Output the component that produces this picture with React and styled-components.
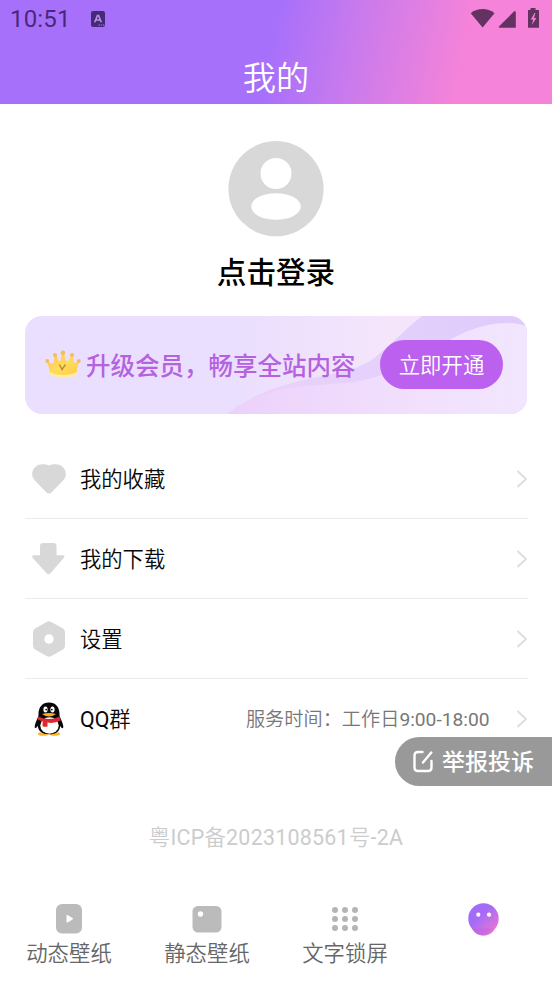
import React from 'react';
import styled, { createGlobalStyle } from 'styled-components';

const GlobalStyle = createGlobalStyle`
  * { box-sizing: border-box; }
  body { margin: 0; background: #fff; }
  svg { display: block; flex: none; }
`;

const lightStack = 'Roboto, "Noto Sans CJK SC DemiLight", "Noto Sans CJK SC", sans-serif';

const Screen = styled.div`
  width: 552px;
  height: 983px;
  display: flex;
  flex-direction: column;
  background: #fff;
  font-family: ${lightStack};
  color: #111;
  overflow: hidden;
  white-space: nowrap;
`;

const Header = styled.header`
  height: 104px;
  flex: none;
  background: linear-gradient(101deg, #a770fb 49%, #c87aed 63%, #f583d9 83%);
`;

const StatusBar = styled.div`
  height: 38px;
  display: flex;
  align-items: center;
  padding: 0 10px;
  color: #47297a;
`;

const Clock = styled.span`
  width: 81px;
  font-size: 24px;
  line-height: 38px;
  letter-spacing: 0.15px;
`;

const StatusIcons = styled.div`
  margin-left: auto;
  margin-top: -1px;
  color: #643260;
`;

const Title = styled.h1`
  margin: 0;
  padding-top: 17px;
  text-align: center;
  font-size: 33.2px;
  font-weight: 350;
  line-height: 48px;
  color: #fff;
`;

const Profile = styled.section`
  height: 212px;
  flex: none;
  padding-top: 37px;
  display: flex;
  flex-direction: column;
  align-items: center;
`;

const LoginText = styled.div`
  margin-top: 14px;
  font-family: Roboto, "Noto Sans CJK SC", sans-serif;
  font-size: 29.6px;
  font-weight: 500;
  line-height: 44px;
  color: #000;
`;

const Banner = styled.section`
  margin: 0 25px 0 24.5px;
  height: 98px;
  flex: none;
  border-radius: 17px;
  overflow: hidden;
  display: grid;
  > * { grid-area: 1 / 1; }
`;

const BannerContent = styled.div`
  display: flex;
  align-items: center;
  padding: 0 24px 1px 20.5px;
  z-index: 1;
`;

const BannerText = styled.span`
  margin-left: 5px;
  padding-top: 5px;
  font-family: Roboto, "Noto Sans CJK SC", sans-serif;
  font-size: 24.5px;
  font-weight: 500;
  line-height: 36px;
  color: #b562e0;
`;

const OpenButton = styled.button`
  margin: 0 0 0 auto;
  padding: 3px 0 0;
  width: 123px;
  height: 49px;
  border: 0;
  border-radius: 25px;
  background: #bb60ef;
  color: #fff;
  font: 350 21.4px/32px ${lightStack};
`;

const Menu = styled.nav`
  padding: 25px 24.5px 0;
  height: 345px;
  flex: none;
`;

const MenuRow = styled.div`
  height: 80px;
  display: flex;
  align-items: center;
  border-bottom: ${({ $last }) => ($last ? '0' : '1px solid #ebebeb')};
`;

const MenuIcon = styled.span`
  width: 49px;
  display: flex;
  justify-content: center;
`;

const MenuLabel = styled.span`
  margin-left: 6.5px;
  padding-top: 2px;
  font-size: 21.3px;
  line-height: 32px;
  color: #080808;
`;

const MenuDetail = styled.span`
  margin-left: auto;
  padding-top: 2px;
  font-size: 19.2px;
  line-height: 28px;
  color: #777;
`;

const ChevronSlot = styled.span`
  margin-left: ${({ $tight }) => ($tight ? '26px' : 'auto')};
`;

const ReportButton = styled.button`
  position: absolute;
  left: 395px;
  top: 737px;
  width: 157px;
  height: 49px;
  border: 0;
  border-radius: 25px 0 0 25px;
  background: #999;
  color: #fff;
  display: flex;
  align-items: center;
  gap: 8px;
  padding: 0 0 0 18px;
  font: 500 23px/34px Roboto, "Noto Sans CJK SC", sans-serif;
`;

const ReportLabel = styled.span`
  padding-top: 3px;
`;

const License = styled.div`
  height: 138px;
  flex: none;
  padding-top: 63px;
  text-align: center;
  font-size: 21.4px;
  line-height: 32px;
  letter-spacing: 0.26px;
  color: #ccc;
`;

const TabBar = styled.nav`
  flex: 1;
  display: grid;
  grid-template-columns: repeat(4, 138px);
`;

const Tab = styled.div`
  display: flex;
  flex-direction: column;
  align-items: center;
  font-size: 21.4px;
  font-weight: 350;
  line-height: 32px;
  color: #666;
`;

const TabIcon = styled.span`
  height: 41px;
  padding-top: 3px;
  display: flex;
  align-items: center;
`;

const KeyboardIcon = () => (
  <svg width="14" height="16" viewBox="0 0 14 16">
    <rect width="14" height="16" rx="2" fill="#47297a" />
    <path d="M3.7 11.3 6.4 4.6h1.2l2.7 6.7M4.8 9h4.4" fill="none" stroke="#b793e8" strokeWidth="1.5" />
    <path d="M7.5 14h6" stroke="#a770fb" strokeWidth="1.2" strokeDasharray="1.4 .8" />
  </svg>
);

const SystemIcons = () => (
  <svg width="72" height="22" viewBox="0 0 72 22">
    <path d="M.7 5.3C7.8-.3 17.5-.3 24.5 5.3L12.6 19.5Z" fill="currentColor" />
    <path d="M45.8 3.7V19.7H29.7C28.7 19.7 28.5 19 29 18.4L44.4 3.1Z" fill="currentColor" />
    <path d="M60.5 0h5v2H69v17.7H58V2h2.5Z" fill="currentColor" />
    <path d="m64.5 5-3.7 6.400h2.400l-1.400 5.500 4.600-7h-2.500l1.500-4.900Z" fill="#f083d8" />
  </svg>
);

const Avatar = () => (
  <svg width="96" height="96" viewBox="0 0 96 96">
    <circle cx="48" cy="47.700" r="47.600" fill="#d8d8d8" />
    <circle cx="48" cy="32.500" r="15.500" fill="#fff" />
    <ellipse cx="48" cy="65.500" rx="24.800" ry="13.300" fill="#fff" />
  </svg>
);

const BannerArt = () => (
  <svg width="502.5" height="98" viewBox="0 0 502.5 98" preserveAspectRatio="none">
    <defs>
      <linearGradient id="base" x1="0" x2="1" y1="0" y2="0">
        <stop offset="0" stopColor="#eadffe" /><stop offset=".42" stopColor="#eadffe" />
        <stop offset=".72" stopColor="#f4e5fb" />
      </linearGradient>
      <linearGradient id="wave" x1="0" x2="1" y1="0" y2="0">
        <stop offset="0" stopColor="#ebd1fa" /><stop offset=".45" stopColor="#e5d1fb" /><stop offset="1" stopColor="#dfcbfc" />
      </linearGradient>
      <linearGradient id="front" x1="0" x2="1" y1="0" y2="0">
        <stop offset="0" stopColor="#ecd1fb" /><stop offset=".65" stopColor="#f2e0fd" />
        <stop offset="1" stopColor="#f1e6fd" />
      </linearGradient>
    </defs>
    <path d="M0 0h503v98H0Z" fill="url(#base)" />
    <path d="M202 98C260 54 316 66 348 43C367 28 381 12 397 0H503V98Z" fill="url(#wave)" />
    <path d="M202 98C240 68 284 71 329 66C400 54 426 7 482 7Q495 7 503 11V98Z" fill="url(#front)" />
  </svg>
);

const Crown = () => (
  <svg width="36" height="29" viewBox="0 0 36 29">
    <defs>
      <linearGradient id="gold" x1="0" y1="0" x2="1" y2="1">
        <stop stopColor="#ffbe55" /><stop offset=".5" stopColor="#ffdc5c" /><stop offset="1" stopColor="#ffcb45" />
      </linearGradient>
    </defs>
    <path d="M2 11Q6.500 15 9 12.500L9.500 5H11.500Q13 12 15 11.500L17 3H19Q20.500 12 23 11.500L26 5H28L28.500 12Q30.500 14 34 11L31 24Q18 30 5.500 24Z" fill="url(#gold)" />
    <path d="M5.500 22.500q12.500 5 26 0v2.500q-13 5-26 0Z" fill="#ffee9c" />
    <g fill="#f3bd58"><circle cx="2.300" cy="11" r="2" /><circle cx="10" cy="5" r="2" /><circle cx="18" cy="2.700" r="2.300" /><circle cx="27" cy="5" r="2.100" /><circle cx="33.700" cy="11" r="2" /></g>
    <path d="m14.500 14.500 2.500 5 3.500-5" fill="none" stroke="#c08a3a" strokeWidth="1.500" />
  </svg>
);

const HeartIcon = () => (
  <svg width="34" height="30" viewBox="0 0 34 30">
    <path d="M17 1.500C21.500-.4 28-.8 31.700 4c3.300 4.300 2.500 9.400-.8 12.700L20 28q-3 3-6 0L3.100 16.700C-.2 13.400-1 8.300 2.300 4 6-.8 12.500-.4 17 1.500Z" fill="#d8d8d8" />
  </svg>
);

const DownloadIcon = () => (
  <svg width="34" height="32" viewBox="0 0 34 32">
    <path d="M11.500 0h10q3 0 3 3v9.200h6q3.500.3 1 3L18.200 30.600q-1.700 1.400-3.400 0L1 15.200q-2-2.700 1-3h6V3q0-3 3.500-3Z" fill="#d8d8d8" />
  </svg>
);

const SettingsIcon = () => (
  <svg width="32" height="36" viewBox="0 0 32 36">
    <path d="M13.700 1q2.300-1.300 4.600 0L30 7.500q2 1.200 2 3.600v13.700q0 2.500-2 3.700L18.300 35q-2.300 1.300-4.600 0L2 28.500q-2-1.200-2-3.700V11.100q0-2.400 2-3.600Z" fill="#d8d8d8" />
    <circle cx="16" cy="18" r="4.700" fill="#fff" />
  </svg>
);

const Penguin = () => (
  <svg width="30" height="34" viewBox="0 0 30 34">
    <ellipse cx="9.300" cy="31.900" rx="5.300" ry="1.800" fill="#f8b62c" />
    <ellipse cx="20.700" cy="31.900" rx="5.300" ry="1.800" fill="#f8b62c" />
    <path d="M15 .5c7 0 11 5 10.500 13.200l2.700 6.600q1.900 5.200.5 5.800-.9.4-2.500-2.200c-.5 5.700-4.500 8.300-11.200 8.300S4.300 29.500 3.800 23.800Q2.200 26.500 1.300 26q-1.400-.6.5-5.800l2.700-6.500C4 5.500 8 .5 15 .5Z" fill="#080808" />
    <ellipse cx="15.500" cy="23.500" rx="9.200" ry="8.200" fill="#fff" />
    <ellipse cx="11.500" cy="7.400" rx="2.100" ry="3" fill="#fff" /><ellipse cx="18.500" cy="7.400" rx="2.100" ry="3" fill="#fff" />
    <circle cx="12.200" cy="7.600" r=".9" /><circle cx="17.800" cy="7.600" r=".9" />
    <path d="M8 12q7-2.200 14 0-7 5.200-14 0Z" fill="#f7ae25" />
    <path d="M4.300 14.400Q15 19.500 25.600 14.400l1 4.200Q20 21.700 13.500 20.600v4q-3 .7-5-.4l.2-5Q6 18.600 3.300 17.300Z" fill="#df2732" />
  </svg>
);

const Chevron = () => (
  <svg width="12" height="20" viewBox="0 0 12 20">
    <path d="M1.500 2 10 10l-8.500 8" fill="none" stroke="#ddd" strokeWidth="1.800" />
  </svg>
);

const EditIcon = () => (
  <svg width="21" height="24" viewBox="0 0 21 24">
    <path d="M9.500 2H5Q1.500 2 1.500 5.500v12Q1.500 21 5 21h10q3.500 0 3.500-3.500V11M10 12.500 18.300 2.500" fill="none" stroke="#fff" strokeWidth="2.400" strokeLinecap="round" />
  </svg>
);

const VideoIcon = () => (
  <svg width="26" height="30" viewBox="0 0 26 30">
    <rect width="26" height="29.500" rx="6" fill="#bbb" />
    <path d="M10.500 12q0-1.500 1.500-.8l4.500 2.800q1.200.8 0 1.600L12 18.300q-1.500.7-1.500-.8Z" fill="#fff" />
  </svg>
);

const PictureIcon = () => (
  <svg width="30" height="28" viewBox="0 0 30 28">
    <rect x=".5" y="1" width="29" height="26.500" rx="5.500" fill="#bbb" />
    <circle cx="8.500" cy="9" r="2.700" fill="#fff" />
  </svg>
);

const GridIcon = () => (
  <svg width="26" height="24" viewBox="0 0 26 24">
    {[3, 13, 23].map((x) => [3, 12, 21].map((y) => <circle key={`${x}-${y}`} cx={x} cy={y} r="3" fill="#b5b5b5" />))}
  </svg>
);

const FaceIcon = () => (
  <svg width="31" height="33" viewBox="0 0 31 33">
    <defs><linearGradient id="face" x1=".4" y1=".35" x2=".9" y2=".9"><stop stopColor="#a36bf8" /><stop offset="1" stopColor="#ee76d0" /></linearGradient></defs>
    <path d="M15.500.3C24 .3 30.700 7 30.700 15.500c0 4-1.500 7.500-3.500 10C24.500 30 21 32.600 15.700 32.600S6.500 30 3.800 25.500C1.500 22.500.3 19.500.3 15.500.3 7 7 .3 15.500.3Z" fill="url(#face)" />
    <path d="M3.800 25.500h20.500q-3.500 5-8.600 7.100Q8 32.500 3.800 25.500Z" fill="#c062e4" opacity=".5" />
    <circle cx="10.300" cy="11.700" r="2.100" fill="#fff" /><circle cx="21" cy="11.700" r="2.100" fill="#fff" />
  </svg>
);

const menuItems = [
  { label: '我的收藏', Icon: HeartIcon },
  { label: '我的下载', Icon: DownloadIcon },
  { label: '设置', Icon: SettingsIcon },
  { label: 'QQ群', Icon: Penguin, detail: '服务时间：工作日9:00-18:00' },
];

const tabs = [
  { label: '动态壁纸', Icon: VideoIcon },
  { label: '静态壁纸', Icon: PictureIcon },
  { label: '文字锁屏', Icon: GridIcon },
  { label: '', Icon: FaceIcon },
];

export default function App() {
  return (
    <Screen>
      <GlobalStyle />
      <Header>
        <StatusBar>
          <Clock>10:51</Clock>
          <KeyboardIcon />
          <StatusIcons><SystemIcons /></StatusIcons>
        </StatusBar>
        <Title>我的</Title>
      </Header>
      <Profile>
        <Avatar />
        <LoginText>点击登录</LoginText>
      </Profile>
      <Banner>
        <BannerArt />
        <BannerContent>
          <Crown />
          <BannerText>升级会员，畅享全站内容</BannerText>
          <OpenButton>立即开通</OpenButton>
        </BannerContent>
      </Banner>
      <Menu>
        {menuItems.map(({ label, Icon, detail }, i) => (
          <MenuRow key={label} $last={i === menuItems.length - 1}>
            <MenuIcon><Icon /></MenuIcon>
            <MenuLabel>{label}</MenuLabel>
            {detail && <MenuDetail>{detail}</MenuDetail>}
            <ChevronSlot $tight={Boolean(detail)}><Chevron /></ChevronSlot>
          </MenuRow>
        ))}
      </Menu>
      <License>粤ICP备2023108561号-2A</License>
      <TabBar>
        {tabs.map(({ label, Icon }, i) => (
          <Tab key={i}>
            <TabIcon><Icon /></TabIcon>
            {label}
          </Tab>
        ))}
      </TabBar>
      <ReportButton><EditIcon /><ReportLabel>举报投诉</ReportLabel></ReportButton>
    </Screen>
  );
}
